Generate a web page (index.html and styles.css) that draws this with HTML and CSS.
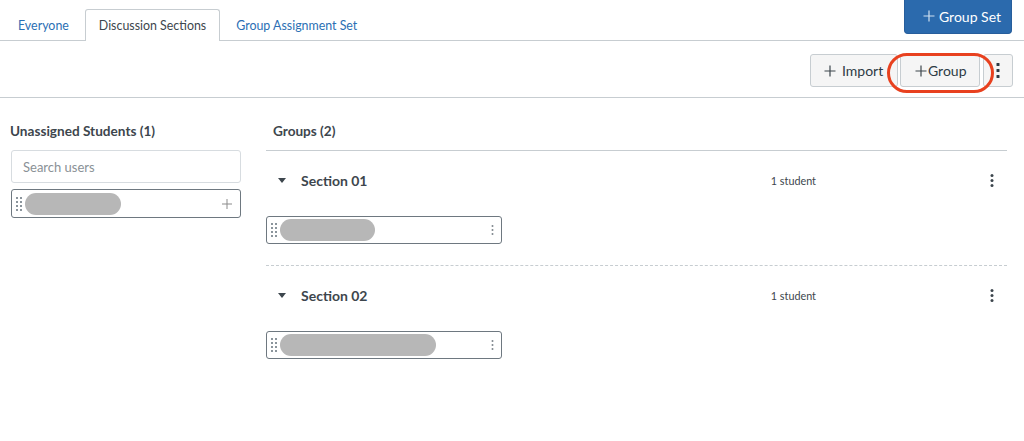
FILE: index.html
```html
<!DOCTYPE html>
<html>
<head>
<meta charset="utf-8">
<link rel="stylesheet" href="styles.css">
</head>
<body>
<header class="tabbar">
  <nav class="tabs">
    <a class="tab">Everyone</a>
    <a class="tab active">Discussion Sections</a>
    <a class="tab">Group Assignment Set</a>
  </nav>
  <button class="btn-primary"><svg class="plus" width="12" height="12" viewBox="0 0 12 12"><path d="M6 0.5V11.5M0.5 6H11.5" stroke="currentColor" stroke-width="1.2"/></svg>Group Set</button>
</header>

<div class="toolbar">
  <button class="btn btn-import"><svg class="plus" width="12" height="12" viewBox="0 0 12 12"><path d="M6 0.5V11.5M0.5 6H11.5" stroke="currentColor" stroke-width="1.2"/></svg>Import</button>
  <button class="btn btn-group"><svg class="plus tight" width="12" height="12" viewBox="0 0 12 12"><path d="M6 0.5V11.5M0.5 6H11.5" stroke="currentColor" stroke-width="1.2"/></svg>Group<span class="highlight"></span></button>
  <button class="btn btn-kebab"><svg width="4" height="15" viewBox="0 0 4 15"><rect x="0.5" y="0" width="3" height="3" rx="0.6"/><rect x="0.5" y="6" width="3" height="3" rx="0.6"/><rect x="0.5" y="12" width="3" height="3" rx="0.6"/></svg></button>
</div>

<main class="content">
  <section class="unassigned">
    <h2 class="col-title">Unassigned Students (1)</h2>
    <div class="search">Search users</div>
    <div class="student student-left">
      <svg class="handle" width="6" height="14" viewBox="0 0 6 14"><g fill="#8b959c"><rect x="0" y="0" width="2" height="2"/><rect x="4" y="0" width="2" height="2"/><rect x="0" y="4" width="2" height="2"/><rect x="4" y="4" width="2" height="2"/><rect x="0" y="8" width="2" height="2"/><rect x="4" y="8" width="2" height="2"/><rect x="0" y="12" width="2" height="2"/><rect x="4" y="12" width="2" height="2"/></g></svg>
      <span class="pill" style="width:96px"></span>
      <svg class="small-plus" width="10" height="10" viewBox="0 0 10 10"><path d="M5 0V10M0 5H10" stroke="#8b8b8b" stroke-width="1"/></svg>
    </div>
  </section>

  <section class="groups">
    <h2 class="col-title groups-title">Groups (2)</h2>

    <div class="group">
      <div class="group-head">
        <svg class="caret" width="8" height="5" viewBox="0 0 8 5"><polygon points="0,0 8,0 4,5" fill="#3d464d"/></svg>
        <span class="group-name">Section 01</span>
        <span class="count">1 student</span>
        <svg class="kebab" width="4" height="13" viewBox="0 0 4 13"><circle cx="2" cy="1.6" r="1.5"/><circle cx="2" cy="6.5" r="1.5"/><circle cx="2" cy="11.4" r="1.5"/></svg>
      </div>
      <div class="student">
        <svg class="handle" width="6" height="14" viewBox="0 0 6 14"><g fill="#8b959c"><rect x="0" y="0" width="2" height="2"/><rect x="4" y="0" width="2" height="2"/><rect x="0" y="4" width="2" height="2"/><rect x="4" y="4" width="2" height="2"/><rect x="0" y="8" width="2" height="2"/><rect x="4" y="8" width="2" height="2"/><rect x="0" y="12" width="2" height="2"/><rect x="4" y="12" width="2" height="2"/></g></svg>
        <span class="pill" style="width:95px"></span>
        <svg class="mini-kebab" width="3" height="10" viewBox="0 0 3 10"><circle cx="1.5" cy="1" r="1"/><circle cx="1.5" cy="5" r="1"/><circle cx="1.5" cy="9" r="1"/></svg>
      </div>
    </div>

    <div class="group">
      <div class="group-head">
        <svg class="caret" width="8" height="5" viewBox="0 0 8 5"><polygon points="0,0 8,0 4,5" fill="#3d464d"/></svg>
        <span class="group-name">Section 02</span>
        <span class="count">1 student</span>
        <svg class="kebab" width="4" height="13" viewBox="0 0 4 13"><circle cx="2" cy="1.6" r="1.5"/><circle cx="2" cy="6.5" r="1.5"/><circle cx="2" cy="11.4" r="1.5"/></svg>
      </div>
      <div class="student">
        <svg class="handle" width="6" height="14" viewBox="0 0 6 14"><g fill="#8b959c"><rect x="0" y="0" width="2" height="2"/><rect x="4" y="0" width="2" height="2"/><rect x="0" y="4" width="2" height="2"/><rect x="4" y="4" width="2" height="2"/><rect x="0" y="8" width="2" height="2"/><rect x="4" y="8" width="2" height="2"/><rect x="0" y="12" width="2" height="2"/><rect x="4" y="12" width="2" height="2"/></g></svg>
        <span class="pill" style="width:156px"></span>
        <svg class="mini-kebab" width="3" height="10" viewBox="0 0 3 10"><circle cx="1.5" cy="1" r="1"/><circle cx="1.5" cy="5" r="1"/><circle cx="1.5" cy="9" r="1"/></svg>
      </div>
    </div>
  </section>
</main>
</body>
</html>
```

FILE: styles.css
```css
* { box-sizing: border-box; }
html, body { margin: 0; padding: 0; background: #fff; }
body {
  font-family: Lato, "Open Sans", "Liberation Sans", sans-serif;
  color: #2d3b45;
  width: 1024px;
  height: 441px;
  overflow: hidden;
}
button { font-family: inherit; }

/* ---------- tab bar ---------- */
.tabbar {
  display: flex;
  justify-content: space-between;
  align-items: flex-start;
  height: 41px;
  border-bottom: 1px solid #c7cdd1;
  padding: 0 12px 0 4px;
}
.tabs {
  display: flex;
  align-self: flex-end;
  gap: 2px;
  margin-bottom: -1px;
}
.tab {
  display: block;
  height: 32px;
  line-height: 31px;
  padding: 0 13px;
  font-size: 12.4px;
  color: #2b6fb4;
  border: 1px solid transparent;
  border-bottom: none;
  border-radius: 3px 3px 0 0;
}
.tab.active {
  color: #3d464d;
  background: #fff;
  border-color: #c7cdd1;
}
.btn-primary {
  display: flex;
  align-items: center;
  gap: 4px;
  height: 34px;
  width: 108px;
  margin: 0;
  padding: 0 0 1px 18px;
  border: 1px solid #275e9c;
  border-top: none;
  border-radius: 0 0 4px 4px;
  background: #2b6aad;
  color: #fff;
  font-size: 14px;
}
.btn-primary .plus { color: #cfe0f1; }

/* ---------- toolbar ---------- */
.toolbar {
  display: flex;
  justify-content: flex-end;
  align-items: flex-start;
  height: 57px;
  padding: 13px 11px 0 0;
  border-bottom: 1px solid #c7cdd1;
}
.btn {
  position: relative;
  display: flex;
  align-items: center;
  height: 33px;
  margin: 0;
  background: #f5f5f5;
  border: 1px solid #c7cdd1;
  border-radius: 3px;
  color: #2d3b45;
  font-size: 14px;
}
.btn .plus { color: #3d464d; }
.btn-import { width: 88px; padding: 0 0 0 13px; gap: 6px; }
.btn-group { width: 80px; margin-left: 2px; padding: 0 0 0 14px; gap: 1px; z-index: 2; }
.btn-kebab { width: 30px; margin-left: 3px; justify-content: center; padding: 0; z-index: 1; }
.btn-kebab svg { fill: #2d3b45; }
.highlight {
  position: absolute;
  left: -14px;
  top: -2px;
  width: 107px;
  height: 40px;
  border: 3px solid #e8411f;
  border-radius: 20px;
  pointer-events: none;
}

/* ---------- content ---------- */
.content {
  display: flex;
  gap: 25px;
  padding: 0 17px 0 10px;
}
.unassigned { width: 231px; flex: none; }
.groups { flex: 1; }
.col-title {
  margin: 0;
  height: 52px;
  padding-top: 24px;
  font-size: 13.6px;
  line-height: 18px;
  font-weight: 700;
  color: #3d464d;
}
.groups-title {
  padding-left: 7px;
  border-bottom: 1px solid #c7cdd1;
  height: 53px;
}
.search {
  height: 33px;
  margin-left: 1px;
  border: 1px solid #d7dce0;
  border-radius: 3px;
  padding: 1px 0 0 11px;
  line-height: 31px;
  font-size: 13px;
  color: #8a9196;
}
.student {
  display: flex;
  align-items: center;
  height: 28px;
  width: 236px;
  border: 1px solid #6e7880;
  border-radius: 3px;
  padding-left: 4px;
  padding-right: 7px;
}
.student-left {
  margin-top: 6px;
  margin-left: 1px;
  width: 230px;
  height: 29px;
  padding-right: 8px;
}
.handle { flex: none; }
.pill {
  display: block;
  height: 22px;
  margin-left: 3px;
  border-radius: 11px;
  background: #b7b7b7;
}
.small-plus { margin-left: auto; }
.mini-kebab { margin-left: auto; fill: #7e868c; }

.group {
  border-bottom: 1px dashed #c7cdd1;
  padding-bottom: 21px;
}
.group:last-child { border-bottom: none; }
.group-head {
  display: flex;
  align-items: center;
  height: 60px;
  padding: 0 13px 1px 12px;
}
.caret { flex: none; }
.group-name {
  margin-left: 15px;
  font-size: 14px;
  font-weight: 700;
  color: #3d464d;
}
.count {
  margin-left: auto;
  margin-right: 174px;
  font-size: 10.8px;
  color: #3d464d;
}
.kebab { fill: #3d464d; }
.groups .student { margin-top: 5px; }
```
